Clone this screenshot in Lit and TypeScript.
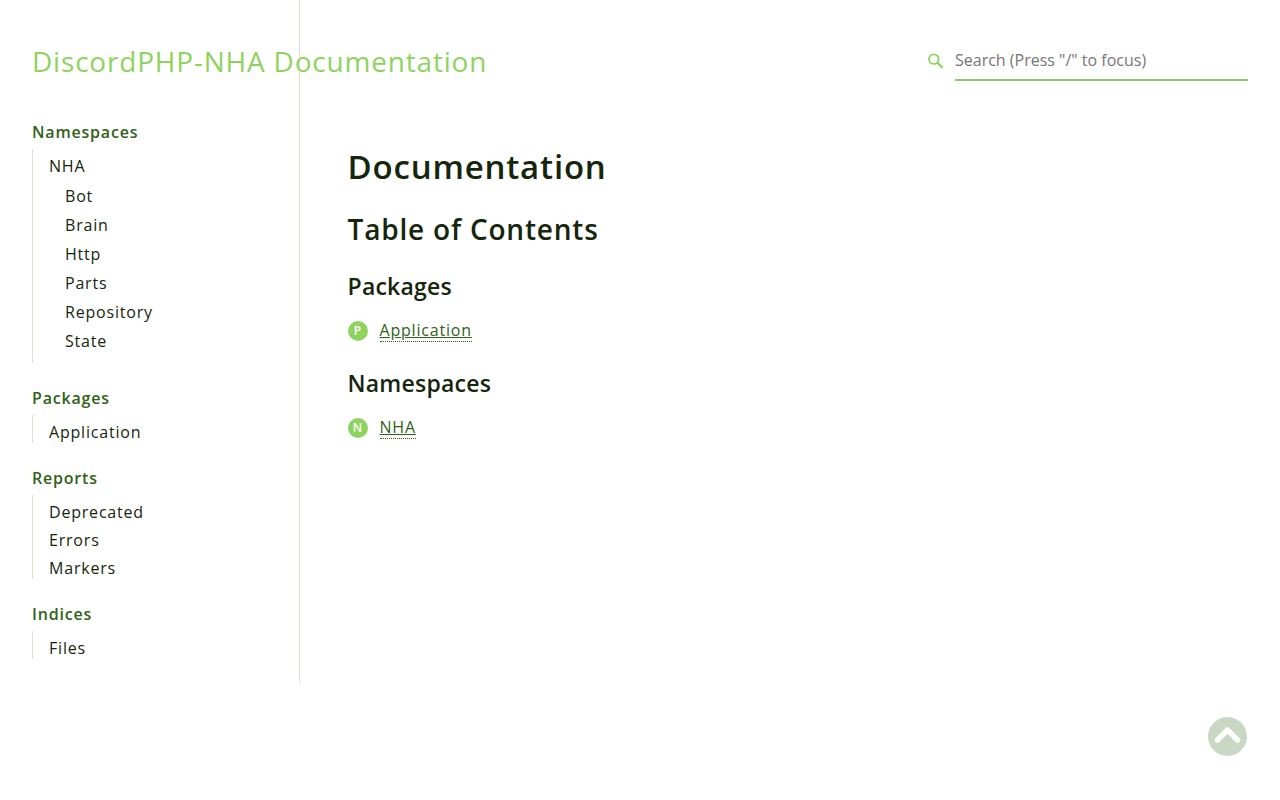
import { LitElement, html, css } from "lit";
import { customElement } from "lit/decorators.js";

interface Entry {
  label: string;
  children?: string[];
}

interface Section {
  title: string;
  entries: Entry[];
}

const SECTIONS: Section[] = [
  {
    title: "Namespaces",
    entries: [
      {
        label: "NHA",
        children: ["Bot", "Brain", "Http", "Parts", "Repository", "State"],
      },
    ],
  },
  { title: "Packages", entries: [{ label: "Application" }] },
  {
    title: "Reports",
    entries: [{ label: "Deprecated" }, { label: "Errors" }, { label: "Markers" }],
  },
  { title: "Indices", entries: [{ label: "Files" }] },
];

const CONTENTS = [
  { title: "Packages", badge: "P", items: ["Application"] },
  { title: "Namespaces", badge: "N", items: ["NHA"] },
];

@customElement("docs-sidebar")
class DocsSidebar extends LitElement {
  static styles = css`
    :host {
      display: block;
    }
    .section {
      margin: 0 0 23px;
    }
    .section:last-child {
      margin-bottom: 0;
    }
    .title {
      margin: 0 0 5px;
      font-size: 16px;
      line-height: 24px;
      font-weight: 600;
      color: #326118;
    }
    .list,
    .nested {
      list-style: none;
      margin: 0;
      padding: 0;
    }
    .list {
      border-left: 1px solid #e0e0d0;
      padding-left: 16px;
    }
    .nested {
      padding: 1px 0 11px 16px;
    }
    .link {
      display: block;
      padding-top: 6px;
      line-height: 22px;
      color: inherit;
      text-decoration: none;
    }
    .nested .link {
      padding-top: 7px;
    }
  `;

  render() {
    return html`<nav aria-label="Documentation">
      ${SECTIONS.map(
        (s) => html`<section class="section">
          <h2 class="title">${s.title}</h2>
          <ul class="list">
            ${s.entries.map(
              (e) => html`<li>
                <a class="link" href="#">${e.label}</a>
                ${e.children
                  ? html`<ul class="nested">
                      ${e.children.map(
                        (c) => html`<li><a class="link" href="#">${c}</a></li>`
                      )}
                    </ul>`
                  : null}
              </li>`
            )}
          </ul>
        </section>`
      )}
    </nav>`;
  }
}

@customElement("app-root")
class AppRoot extends LitElement {
  static styles = css`
    :host {
      display: block;
      font-family: "Open Sans", sans-serif;
      font-size: 16px;
      letter-spacing: 0.05em;
      color: #16260d;
      background: #fff;
    }
    .page {
      display: grid;
      grid-template-columns: 22% 1fr;
      grid-template-rows: 120px auto;
      column-gap: 48px;
      align-items: start;
      padding: 0 32px;
    }
    .header {
      grid-area: 1 / 1 / 2 / 3;
      display: flex;
      justify-content: space-between;
      align-items: flex-start;
      padding-top: 42px;
      z-index: 1;
    }
    .brand {
      margin: 0;
      font-size: 28px;
      line-height: 38px;
      font-weight: 400;
    }
    .brand-link {
      color: #8fd35f;
      text-decoration: none;
    }
    .search {
      display: flex;
      align-items: center;
      gap: 11px;
      width: 321px;
    }
    .search-label {
      display: flex;
    }
    .search-icon {
      width: 17px;
      height: 17px;
    }
    .search-input {
      flex: 1;
      min-width: 0;
      box-sizing: border-box;
      height: 39px;
      padding: 0 0 2px;
      border: 0;
      border-bottom: 2px solid #8fca68;
      border-radius: 0;
      outline: 0;
      background: transparent;
      font-family: inherit;
      font-size: 16px;
      color: inherit;
    }
    .search-input::placeholder {
      color: #757575;
      opacity: 1;
    }
    .sidebar {
      grid-area: 1 / 1 / 3 / 2;
      padding: 120px 0 24px;
      border-right: 1px solid #e0e0d0;
    }
    .content {
      grid-area: 2 / 2 / 3 / 3;
      padding-top: 23px;
    }
    .h1,
    .h2,
    .h3 {
      margin: 0;
      font-weight: 600;
    }
    .h1 {
      font-size: 33px;
      line-height: 48px;
    }
    .h2 {
      margin-top: 18px;
      font-size: 28px;
      line-height: 40px;
    }
    .h3 {
      margin-top: 21px;
      font-size: 23px;
      line-height: 32px;
      letter-spacing: 0.01em;
    }
    .toc {
      list-style: none;
      margin: 16px 0 0;
      padding: 0 0 4px;
    }
    .item {
      display: flex;
      align-items: center;
      gap: 12px;
      height: 24px;
    }
    .badge {
      display: grid;
      place-items: center;
      width: 20px;
      height: 20px;
      margin-top: 2px;
      border-radius: 50%;
      background: #8fd35f;
      color: #fff;
      font-size: 12px;
      line-height: 20px;
      font-weight: 600;
      letter-spacing: 0;
    }
    .item-link {
      border-bottom: 1px dotted #326118;
      line-height: 22px;
      color: #326118;
      text-decoration: underline;
    }
    .back {
      position: fixed;
      right: 32px;
      bottom: 44px;
      display: flex;
      opacity: 0.25;
    }
    .back-icon {
      width: 40px;
      height: 40px;
    }
  `;

  render() {
    return html`<div class="page">
        <header class="header">
          <h1 class="brand">
            <a class="brand-link" href="#">DiscordPHP-NHA Documentation</a>
          </h1>
          <form class="search" role="search" @submit=${(e: Event) => e.preventDefault()}>
            <label class="search-label" for="search" aria-label="Search">
              <svg class="search-icon" viewBox="0 0 17 17" aria-hidden="true">
                <g fill="none" stroke="#8fd35f">
                  <circle cx="6.8" cy="6.1" r="4.8" stroke-width="1.8" />
                  <path d="M10.3 9.6 L15.6 14.9" stroke-width="2.2" />
                </g>
              </svg>
            </label>
            <input
              class="search-input"
              id="search"
              type="search"
              placeholder='Search (Press "/" to focus)'
            />
          </form>
        </header>
        <docs-sidebar class="sidebar"></docs-sidebar>
        <main class="content">
          <h2 class="h1">Documentation</h2>
          <h3 class="h2">Table of Contents</h3>
          ${CONTENTS.map(
            (c) => html`<h4 class="h3">${c.title}</h4>
              <ul class="toc">
                ${c.items.map(
                  (i) => html`<li class="item">
                    <span class="badge" aria-hidden="true">${c.badge}</span>
                    <a class="item-link" href="#">${i}</a>
                  </li>`
                )}
              </ul>`
          )}
        </main>
      </div>
      <a class="back" href="#" aria-label="Back to top">
        <svg class="back-icon" viewBox="0 0 40 40" aria-hidden="true">
          <path
            fill="#326118"
            fill-rule="evenodd"
            d="M19.5 1a19.5 19.5 0 1 0 0 39a19.5 19.5 0 1 0 0-39zM21.3 11.9L31.6 22.2a2.5 2.5 0 0 1 0 3.6l-.4.3a2.5 2.5 0 0 1-3.5 0L19.5 17.7L11.3 26.1a2.5 2.5 0 0 1-3.5 0l-.4-.3a2.5 2.5 0 0 1 0-3.6L17.7 11.9a2.5 2.5 0 0 1 3.6 0z"
          />
        </svg>
      </a>`;
  }
}
